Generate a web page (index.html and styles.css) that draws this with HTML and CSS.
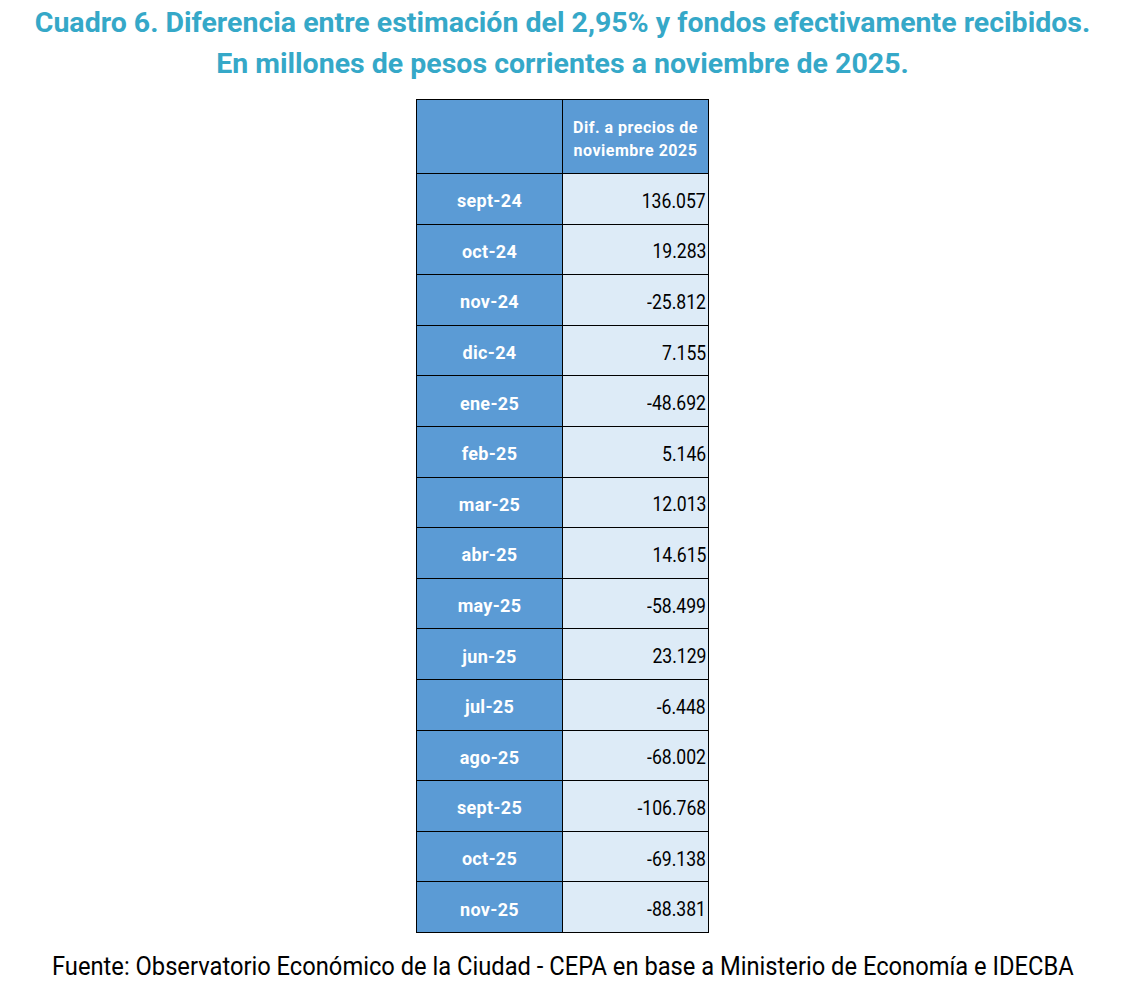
FILE: index.html
```html
<!DOCTYPE html>
<html lang="es">
<head>
<meta charset="utf-8">
<link rel="stylesheet" href="styles.css">
</head>
<body>
<div class="page">
  <h1 class="title">Cuadro 6. Diferencia entre estimación del 2,95% y fondos efectivamente recibidos.<br>En millones de pesos corrientes a noviembre de 2025.</h1>
  <table class="tbl">
    <thead>
      <tr><th class="corner"></th><th class="head">Dif. a precios de<br>noviembre 2025</th></tr>
    </thead>
    <tbody>
      <tr><th>sept-24</th><td><span class="num">136.057</span></td></tr>
      <tr><th>oct-24</th><td><span class="num">19.283</span></td></tr>
      <tr><th>nov-24</th><td><span class="num">-25.812</span></td></tr>
      <tr><th>dic-24</th><td><span class="num">7.155</span></td></tr>
      <tr><th>ene-25</th><td><span class="num">-48.692</span></td></tr>
      <tr><th>feb-25</th><td><span class="num">5.146</span></td></tr>
      <tr><th>mar-25</th><td><span class="num">12.013</span></td></tr>
      <tr><th>abr-25</th><td><span class="num">14.615</span></td></tr>
      <tr><th>may-25</th><td><span class="num">-58.499</span></td></tr>
      <tr><th>jun-25</th><td><span class="num">23.129</span></td></tr>
      <tr><th>jul-25</th><td><span class="num">-6.448</span></td></tr>
      <tr><th>ago-25</th><td><span class="num">-68.002</span></td></tr>
      <tr><th>sept-25</th><td><span class="num">-106.768</span></td></tr>
      <tr><th>oct-25</th><td><span class="num">-69.138</span></td></tr>
      <tr><th>nov-25</th><td><span class="num">-88.381</span></td></tr>
    </tbody>
  </table>
  <p class="source"><span class="source-text">Fuente: Observatorio Económico de la Ciudad - CEPA en base a Ministerio de Economía e IDECBA</span></p>
</div>
</body>
</html>
```
FILE: styles.css
```css
html, body {
  margin: 0;
  padding: 0;
  background: #ffffff;
}
body {
  font-family: Roboto, "Liberation Sans", sans-serif;
}
.page {
  width: 1125px;
  display: flex;
  flex-direction: column;
  align-items: center;
}
.title {
  margin: 2px 0 0 0;
  text-align: center;
  color: #35a8c8;
  font-size: 28.5px;
  font-weight: 700;
  line-height: 41px;
  white-space: nowrap;
}
.tbl {
  margin-top: 15px;
  border-collapse: collapse;
}
.tbl th, .tbl td {
  border: 1px solid #000;
  padding: 0;
}
.tbl thead th {
  height: 68px;
  padding-top: 5px;
  background: #5b9bd5;
  color: #fff;
  font-size: 16px;
  font-weight: 700;
  letter-spacing: 0.5px;
  line-height: 23px;
  text-align: center;
}
.tbl .corner { width: 145px; }
.tbl .head { width: 145px; }
.tbl tbody th {
  height: 45.6px;
  padding-top: 4px;
  background: #5b9bd5;
  color: #fff;
  font-size: 18px;
  font-weight: 700;
  letter-spacing: 0.3px;
  text-align: center;
}
.tbl tbody td {
  background: #ddebf7;
  color: #000;
  font-size: 20px;
  text-align: right;
  padding: 4px 2px 0 0;
}
.num {
  display: inline-block;
  transform: scaleX(0.88);
  transform-origin: right center;
}
.source {
  margin: 19px 0 0 0;
  font-size: 25px;
  color: #000;
  white-space: nowrap;
}
.source-text {
  display: inline-block;
  transform: scaleX(0.948);
  transform-origin: center center;
}
```
